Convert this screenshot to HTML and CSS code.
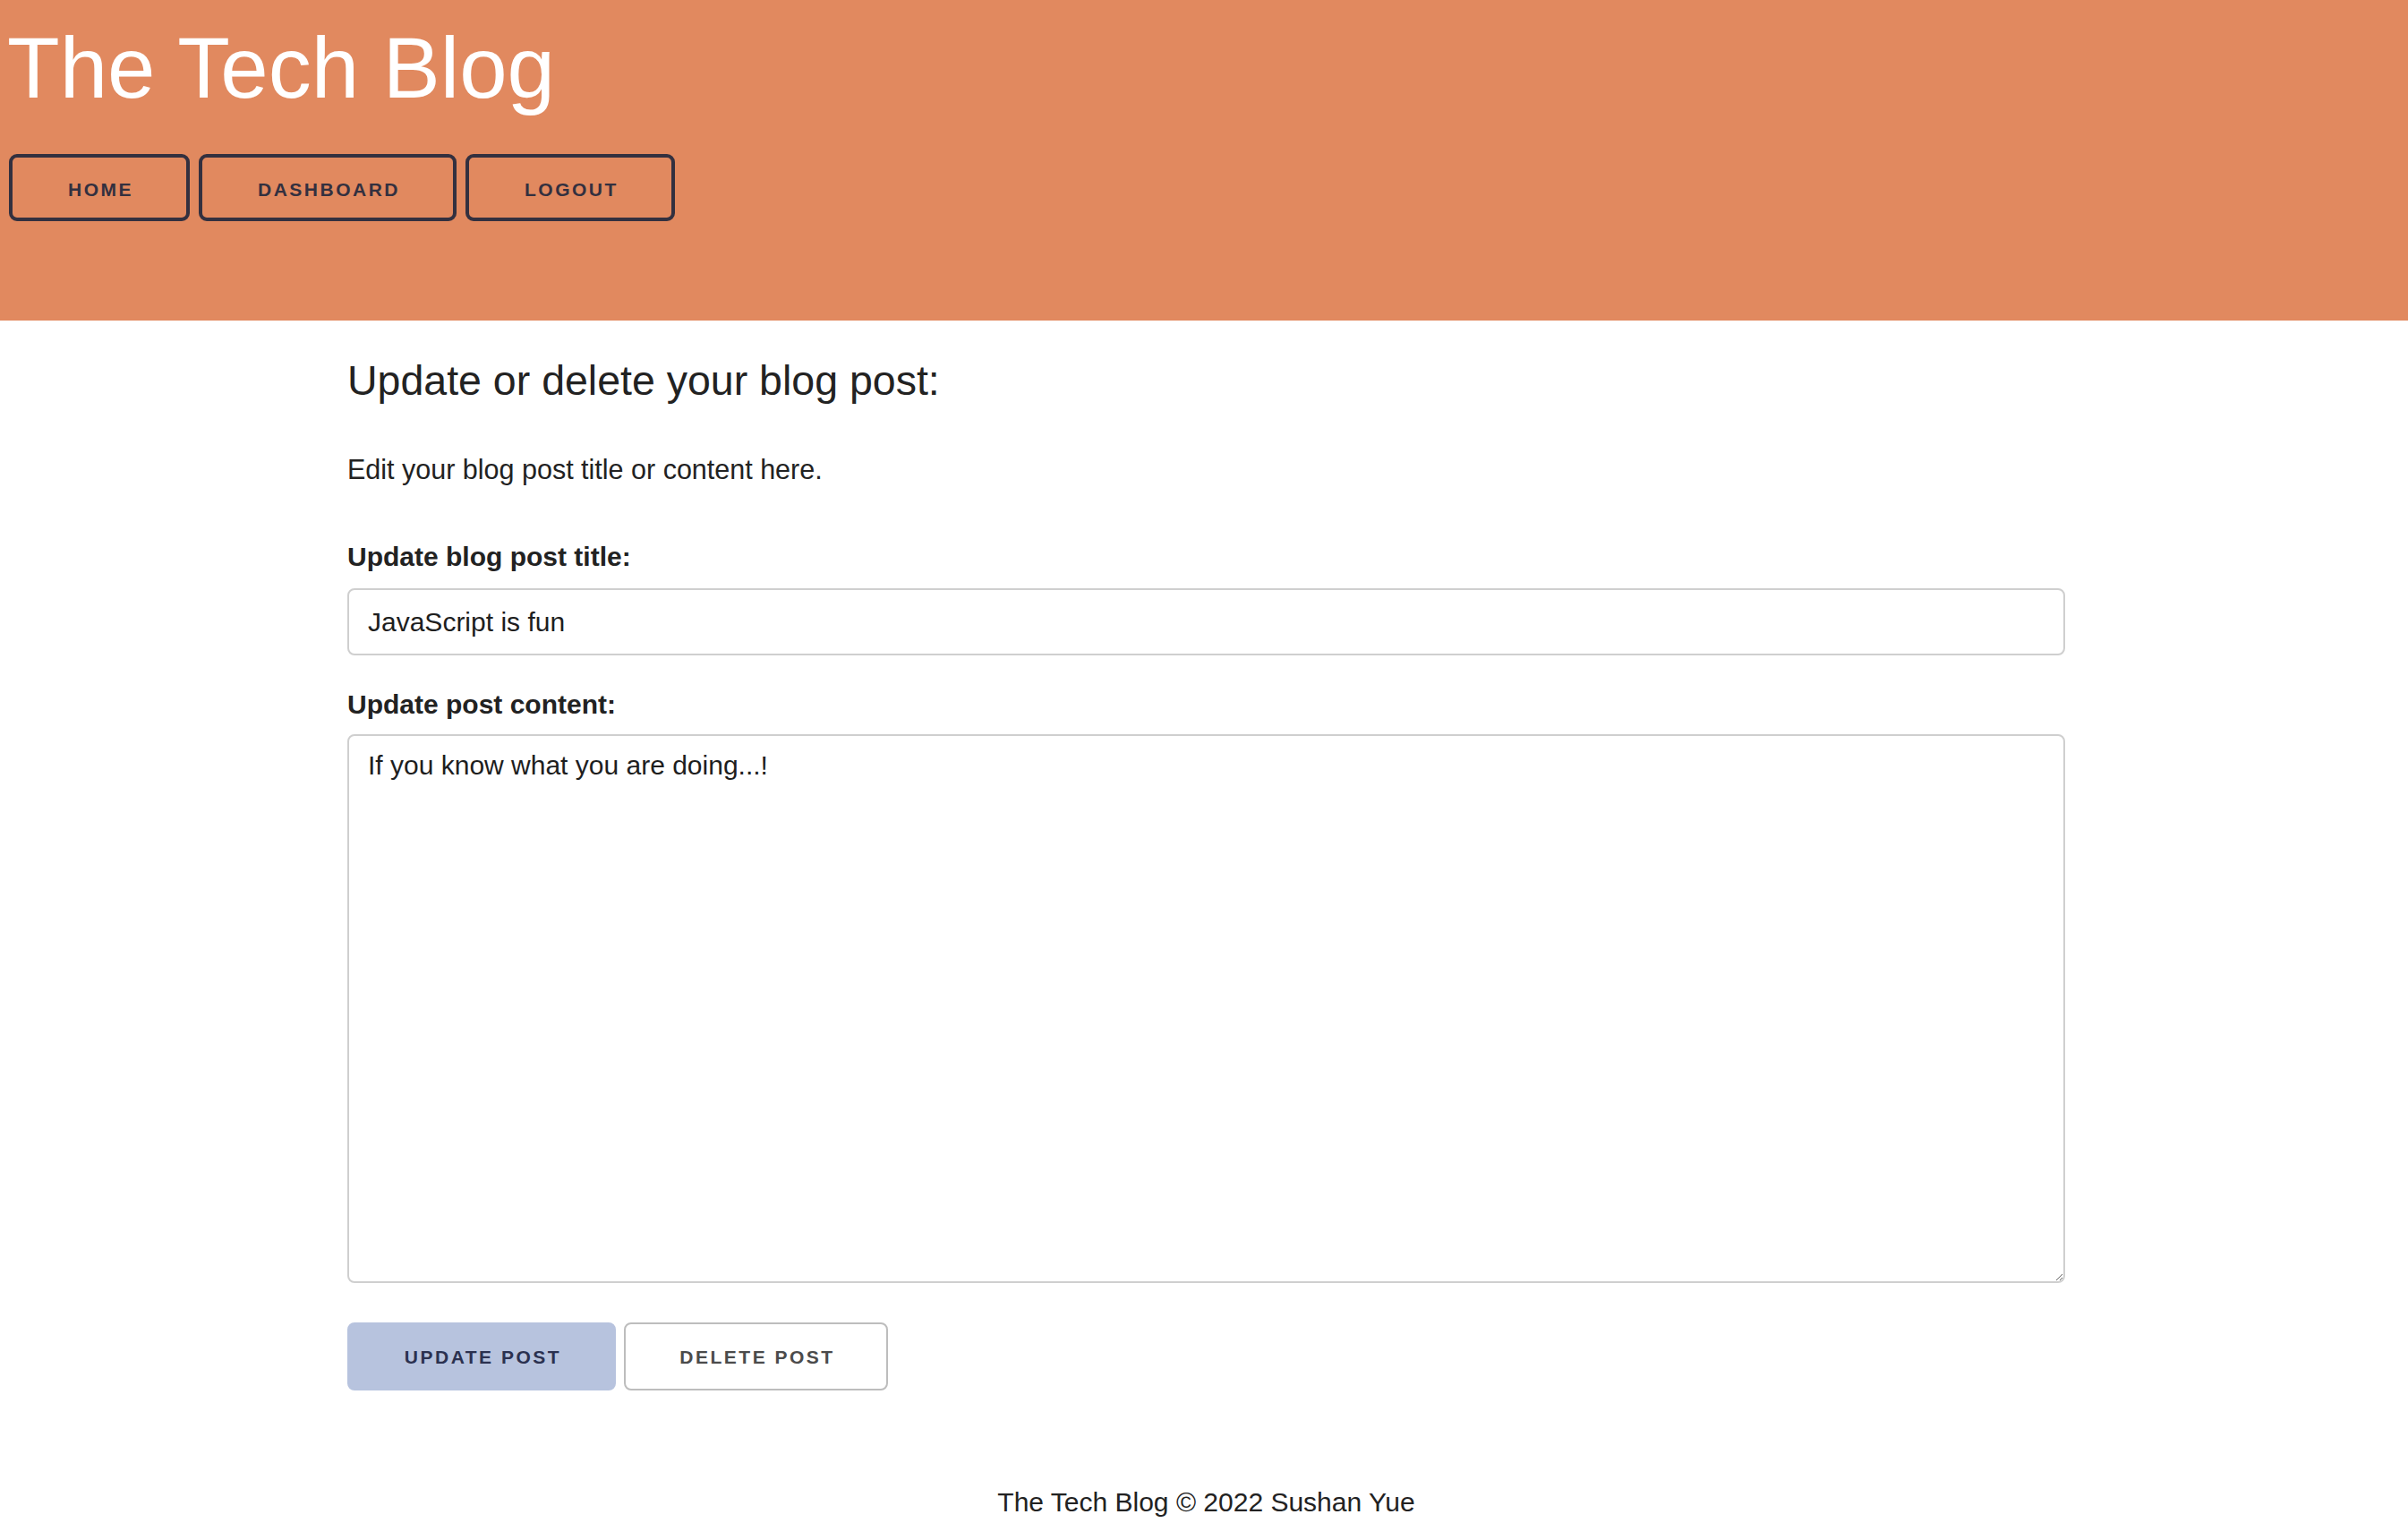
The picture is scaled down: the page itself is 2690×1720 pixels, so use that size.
FILE: index.html
```html
<!DOCTYPE html>
<html lang="en">
<head>
<meta charset="utf-8">
<title>The Tech Blog</title>
<link rel="stylesheet" href="styles.css">
</head>
<body>
<header class="site-header">
  <h1 class="site-title">The Tech Blog</h1>
  <nav class="site-nav">
    <a class="nav-btn" href="#">HOME</a>
    <a class="nav-btn" href="#">DASHBOARD</a>
    <a class="nav-btn" href="#">LOGOUT</a>
  </nav>
</header>
<main class="content">
  <h2 class="page-heading">Update or delete your blog post:</h2>
  <p class="intro">Edit your blog post title or content here.</p>
  <form class="post-form">
    <label class="field-label" for="post-title">Update blog post title:</label>
    <input class="field-input" id="post-title" type="text" value="JavaScript is fun">
    <label class="field-label field-label-content" for="post-content">Update post content:</label>
    <textarea class="field-textarea" id="post-content">If you know what you are doing...!</textarea>
    <div class="actions">
      <button class="btn btn-update" type="button">UPDATE POST</button>
      <button class="btn btn-delete" type="button">DELETE POST</button>
    </div>
  </form>
</main>
<footer class="site-footer">The Tech Blog © 2022 Sushan Yue</footer>
</body>
</html>
```
FILE: styles.css
```css
* {
  box-sizing: border-box;
}

html, body {
  margin: 0;
  padding: 0;
  background: #ffffff;
}

body {
  font-family: "Liberation Sans", Arial, Helvetica, sans-serif;
  color: #222222;
}

.site-header {
  height: 358px;
  background: #e1895f;
  padding: 21px 0 0 8px;
}

.site-title {
  margin: 0;
  font-size: 96px;
  line-height: 110px;
  font-weight: 400;
  color: #ffffff;
}

.site-nav {
  display: flex;
  gap: 10px;
  margin: 41px 0 0 2px;
}

.nav-btn {
  display: flex;
  align-items: center;
  justify-content: center;
  height: 75px;
  padding: 4px 59px 0 62px;
  border: 4px solid #33303f;
  border-radius: 9px;
  color: #33303f;
  font-size: 21px;
  font-weight: 700;
  letter-spacing: 2.5px;
  text-decoration: none;
  white-space: nowrap;
}

.content {
  width: 1919px;
  margin: 0 0 0 388px;
}

.page-heading {
  margin: 40px 0 0 0;
  font-size: 46.5px;
  font-weight: 400;
  line-height: normal;
  color: #222222;
}

.intro {
  margin: 55px 0 0 0;
  font-size: 30.5px;
  line-height: normal;
}

.post-form {
  display: flex;
  flex-direction: column;
  margin-top: 63px;
}

.field-label {
  font-size: 30px;
  font-weight: 700;
  line-height: normal;
  margin-bottom: 18px;
}

.field-label-content {
  margin-top: 38px;
  margin-bottom: 16px;
}

.field-input,
.field-textarea {
  width: 100%;
  border: 2px solid #cfcfcf;
  border-radius: 8px;
  font-family: "Liberation Sans", Arial, Helvetica, sans-serif;
  font-size: 30px;
  color: #1e1e1e;
  background: #ffffff;
  outline: none;
}

.field-input {
  height: 75px;
  padding: 0 21px;
}

.field-textarea {
  height: 613px;
  padding: 16px 21px;
  line-height: normal;
  resize: vertical;
}

.actions {
  display: flex;
  gap: 9px;
  margin-top: 44px;
}

.btn {
  display: flex;
  align-items: center;
  justify-content: center;
  height: 76px;
  padding: 2px 0 0 3px;
  border-radius: 8px;
  font-family: "Liberation Sans", Arial, Helvetica, sans-serif;
  font-size: 21px;
  font-weight: 700;
  letter-spacing: 2.5px;
  white-space: nowrap;
  cursor: pointer;
}

.btn-update {
  width: 300px;
  background: #b7c3de;
  border: 2px solid #b7c3de;
  color: #2b3150;
}

.btn-delete {
  width: 295px;
  background: #ffffff;
  border: 2px solid #bdbdbd;
  color: #4b4b4b;
}

.site-footer {
  margin-top: 108px;
  text-align: center;
  font-size: 30px;
  line-height: normal;
  color: #222222;
  padding-left: 5px;
}
```
